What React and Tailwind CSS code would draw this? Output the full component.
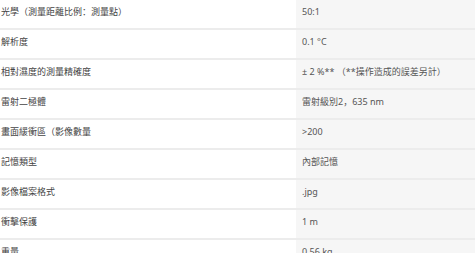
const specs = [
  ["光學（測量距離比例：測量點）", "50:1"],
  ["解析度", "0.1 °C"],
  ["相對濕度的測量精確度", "± 2 %** （**操作造成的誤差另計）"],
  ["雷射二極體", "雷射級別2，635 nm"],
  ["畫面緩衝區（影像數量", ">200"],
  ["記憶類型", "內部記憶"],
  ["影像檔案格式", ".jpg"],
  ["衝擊保護", "1 m"],
  ["重量", "0.56 kg"],
];

export default function App() {
  return (
    <div
      className="w-[475px] h-[253px] overflow-hidden bg-white text-[9px]"
      style={{ fontFamily: '"Noto Sans", "Noto Sans CJK SC", sans-serif' }}
    >
      {specs.map(([label, value]) => (
        <div key={label} className="flex h-[30px] border-b-2 border-[#ececec]">
          {/* label */}
          <div className="w-[296px] pl-[1px] pt-[5px] leading-[14px] text-[#444]">
            {label}
          </div>
          {/* value */}
          <div className="flex-1 bg-[#f6f6f6] pl-[6px] pt-[5px] leading-[14px] text-[#555]">
            {value}
          </div>
        </div>
      ))}
    </div>
  );
}
